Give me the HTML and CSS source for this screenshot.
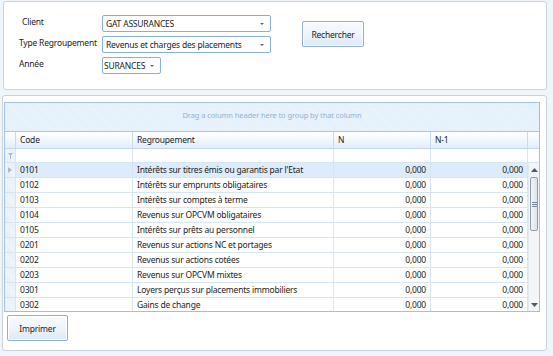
FILE: index.html
```html
<!DOCTYPE html>
<html lang="fr">
<head>
    <meta charset="UTF-8">
    <title>Regroupement</title>
    <link rel="stylesheet" href="styles.css">
</head>
<body>
    <div class="panel top-panel">
        <div class="form">
            <label class="lbl lbl-client">Client</label>
            <div class="combo combo-wide"><span>GAT ASSURANCES</span><i class="arrow"></i></div>
            <label class="lbl">Type Regroupement</label>
            <div class="combo combo-wide"><span>Revenus et charges des placements</span><i class="arrow"></i></div>
            <label class="lbl">Année</label>
            <div class="combo combo-small"><span>SURANCES</span><i class="arrow"></i></div>
        </div>
        <button class="btn btn-search">Rechercher</button>
    </div>

    <div class="panel bottom-panel">
        <div class="grid">
            <div class="group-panel">Drag a column header here to group by that column</div>
            <div class="row header-row">
                <div class="cell ind"></div>
                <div class="cell">Code</div>
                <div class="cell">Regroupement</div>
                <div class="cell">N</div>
                <div class="cell">N-1</div>
                <div class="cell last"></div>
            </div>
            <div class="row filter-row">
                <div class="cell ind">
                    <svg width="5" height="6" viewBox="0 0 5 6"><path d="M0 0H5L3 2.5V6H2V2.5Z" fill="#9fbddb"/></svg>
                </div>
                <div class="cell"></div>
                <div class="cell"></div>
                <div class="cell"></div>
                <div class="cell"></div>
                <div class="cell last"></div>
            </div>
            <div class="body">
                <div class="rows">
                    <div class="row data-row selected">
                        <div class="cell ind"><svg width="4" height="6" viewBox="0 0 4 6"><path d="M0 0L4 3L0 6Z" fill="#a9b8c8"/></svg></div>
                        <div class="cell">0101</div>
                        <div class="cell">Intérêts sur titres émis ou garantis par l'Etat</div>
                        <div class="cell num">0,000</div>
                        <div class="cell num">0,000</div>
                    </div>
                    <div class="row data-row">
                        <div class="cell ind"></div>
                        <div class="cell">0102</div>
                        <div class="cell">Intérêts sur emprunts obligataires</div>
                        <div class="cell num">0,000</div>
                        <div class="cell num">0,000</div>
                    </div>
                    <div class="row data-row">
                        <div class="cell ind"></div>
                        <div class="cell">0103</div>
                        <div class="cell">Intérêts sur comptes à terme</div>
                        <div class="cell num">0,000</div>
                        <div class="cell num">0,000</div>
                    </div>
                    <div class="row data-row">
                        <div class="cell ind"></div>
                        <div class="cell">0104</div>
                        <div class="cell">Revenus sur OPCVM obligataires</div>
                        <div class="cell num">0,000</div>
                        <div class="cell num">0,000</div>
                    </div>
                    <div class="row data-row">
                        <div class="cell ind"></div>
                        <div class="cell">0105</div>
                        <div class="cell">Intérêts sur prêts au personnel</div>
                        <div class="cell num">0,000</div>
                        <div class="cell num">0,000</div>
                    </div>
                    <div class="row data-row">
                        <div class="cell ind"></div>
                        <div class="cell">0201</div>
                        <div class="cell">Revenus sur actions NC et portages</div>
                        <div class="cell num">0,000</div>
                        <div class="cell num">0,000</div>
                    </div>
                    <div class="row data-row">
                        <div class="cell ind"></div>
                        <div class="cell">0202</div>
                        <div class="cell">Revenus sur actions cotées</div>
                        <div class="cell num">0,000</div>
                        <div class="cell num">0,000</div>
                    </div>
                    <div class="row data-row">
                        <div class="cell ind"></div>
                        <div class="cell">0203</div>
                        <div class="cell">Revenus sur OPCVM mixtes</div>
                        <div class="cell num">0,000</div>
                        <div class="cell num">0,000</div>
                    </div>
                    <div class="row data-row">
                        <div class="cell ind"></div>
                        <div class="cell">0301</div>
                        <div class="cell">Loyers perçus sur placements immobiliers</div>
                        <div class="cell num">0,000</div>
                        <div class="cell num">0,000</div>
                    </div>
                    <div class="row data-row">
                        <div class="cell ind"></div>
                        <div class="cell">0302</div>
                        <div class="cell">Gains de change</div>
                        <div class="cell num">0,000</div>
                        <div class="cell num">0,000</div>
                    </div>
                </div>
                <div class="scrollbar">
                    <div class="sb-arrow"><svg width="7" height="4" viewBox="0 0 7 4"><path d="M0 4L3.5 0L7 4Z" fill="#4d5a6b"/></svg></div>
                    <div class="sb-track">
                        <div class="sb-thumb"><span></span><span></span><span></span></div>
                    </div>
                    <div class="sb-arrow"><svg width="7" height="4" viewBox="0 0 7 4"><path d="M0 0L3.5 4L7 0Z" fill="#4d5a6b"/></svg></div>
                </div>
            </div>
        </div>
        <button class="btn btn-print">Imprimer</button>
    </div>
</body>
</html>
```

FILE: styles.css
```css
html, body {
    margin: 0;
    padding: 0;
}

body {
    width: 553px;
    height: 356px;
    padding-top: 1px;
    box-sizing: border-box;
    background: #eef6fb;
    font-family: "Noto Sans", "Open Sans", sans-serif;
    font-size: 8.5px;
    letter-spacing: -0.2px;
    color: #1b1b1b;
    overflow: hidden;
}

.panel {
    background: #fff;
    border: 1px solid #c9d1d9;
    border-radius: 3px;
    box-sizing: border-box;
}

.top-panel {
    margin-left: 3px;
    width: 544px;
    height: 89px;
    padding: 13px 0 0 15px;
    display: flex;
    align-items: flex-start;
    gap: 31px;
}

.form {
    display: grid;
    grid-template-columns: 83px auto;
    row-gap: 4px;
    align-items: center;
}

.lbl {
    font-size: 8.5px;
    white-space: nowrap;
    margin-top: -4px;
}

.lbl-client {
    padding-left: 3px;
}

.combo {
    position: relative;
    height: 17px;
    border: 1px solid #86aee0;
    border-radius: 2px;
    box-sizing: border-box;
    background: #fff;
    padding-left: 3px;
    line-height: 15px;
    font-size: 8.5px;
    white-space: nowrap;
}

.combo-wide {
    width: 169px;
}

.combo-small {
    width: 59px;
    padding-left: 1px;
}

.arrow {
    position: absolute;
    right: 6px;
    top: 7px;
    width: 0;
    height: 0;
    border-left: 2px solid transparent;
    border-right: 2px solid transparent;
    border-top: 2px solid #5a6573;
}

.btn {
    font-family: inherit;
    font-size: 8.5px;
    letter-spacing: -0.2px;
    color: #1b1b1b;
    border: 1px solid #8eaed3;
    border-radius: 2px;
    background: linear-gradient(#f7fbff 0%, #eef5fd 50%, #dbe8f7 100%);
    box-shadow: inset 0 0 0 1px #ffffff;
    padding: 0;
    cursor: pointer;
}

.btn-search {
    margin-top: 6px;
    width: 62px;
    height: 26px;
}

.bottom-panel {
    margin-top: 5px;
    margin-left: 2px;
    width: 545px;
    height: 256px;
    padding: 6px 0 0 1px;
}

.grid {
    width: 536px;
    height: 210px;
    border: 1px solid #9fc0e3;
    box-sizing: border-box;
    overflow: hidden;
}

.group-panel {
    height: 28px;
    border-bottom: 1px solid #a9c7e6;
    background: repeating-linear-gradient(45deg, #e4f0fb 0, #e4f0fb 1px, #e9f3fc 1px, #e9f3fc 2px);
    color: #93b2d3;
    font-size: 7.5px;
    letter-spacing: -0.1px;
    text-align: center;
    line-height: 24px;
}

.row {
    display: grid;
    grid-template-columns: 11px 117px 201px 97px 97px 11px;
}

.cell {
    border-right: 1px solid #d6e5f3;
    padding-left: 4px;
    white-space: nowrap;
    overflow: hidden;
}

.cell.ind {
    padding: 0;
    display: flex;
    align-items: center;
    justify-content: center;
    background: repeating-linear-gradient(45deg, #e6eff8 0, #e6eff8 1px, #f1f6fb 1px, #f1f6fb 2px);
}

.cell.last {
    border-right: none;
}

.header-row {
    height: 17px;
    line-height: 16px;
    border-bottom: 1px solid #c1d6ec;
    box-sizing: border-box;
    background: linear-gradient(#ffffff 0%, #f1f7fd 50%, #e1edf9 100%);
}

.header-row .cell {
    border-right-color: #c6daee;
}

.header-row .cell.ind {
    background: transparent;
}

.filter-row {
    height: 14px;
    border-bottom: 1px solid #d6e5f3;
    box-sizing: border-box;
}

.body {
    display: flex;
    height: 148px;
}

.rows {
    width: 523px;
    overflow: hidden;
}

.data-row {
    grid-template-columns: 11px 117px 201px 97px 97px;
    height: 15px;
    line-height: 14px;
    border-bottom: 1px solid #d6e5f3;
    box-sizing: border-box;
}

.data-row.selected .cell:not(.ind) {
    background: #dcecfb;
}

.num {
    text-align: right;
    padding-right: 4px;
    padding-left: 0;
}

.scrollbar {
    width: 11px;
    display: flex;
    flex-direction: column;
    background: #f3f5f8;
    border-left: 1px solid #e4e9ef;
    box-sizing: border-box;
}

.sb-arrow {
    height: 13px;
    display: flex;
    align-items: center;
    justify-content: center;
}

.sb-track {
    flex: 1;
    padding-top: 1px;
}

.sb-thumb {
    margin: 0 1px;
    height: 54px;
    border: 1px solid #8f9cad;
    border-radius: 2px;
    box-sizing: border-box;
    background: linear-gradient(90deg, #f2f4f7, #dde3ea);
    display: flex;
    flex-direction: column;
    justify-content: center;
    align-items: center;
    gap: 1px;
}

.sb-thumb span {
    width: 5px;
    height: 1px;
    background: #7b8797;
}

.btn-print {
    margin: 3px 0 0 3px;
    width: 61px;
    height: 26px;
}
```
